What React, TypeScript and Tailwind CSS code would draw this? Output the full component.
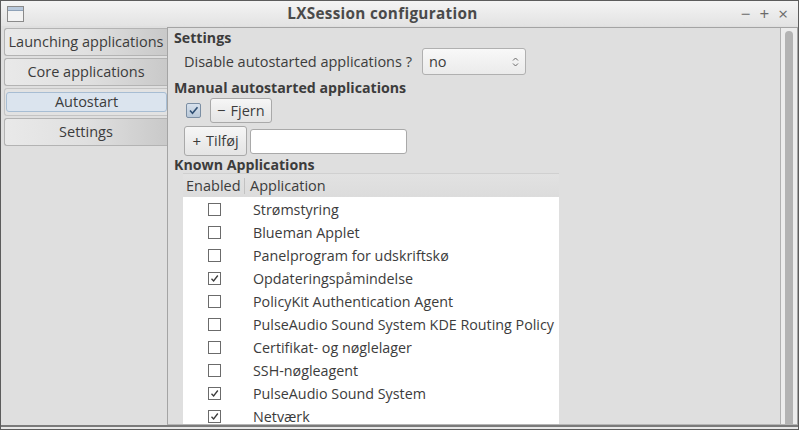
import React from "react";

const apps: { name: string; on: boolean }[] = [
  { name: "Strømstyring", on: false },
  { name: "Blueman Applet", on: false },
  { name: "Panelprogram for udskriftskø", on: false },
  { name: "Opdateringspåmindelse", on: true },
  { name: "PolicyKit Authentication Agent", on: false },
  { name: "PulseAudio Sound System KDE Routing Policy", on: false },
  { name: "Certifikat- og nøglelager", on: false },
  { name: "SSH-nøgleagent", on: false },
  { name: "PulseAudio Sound System", on: true },
  { name: "Netværk", on: true },
];

function Check({ on }: { on: boolean }) {
  return (
    <span className="flex h-[13px] w-[13px] items-center justify-center border border-[#6b6b6b] bg-white">
      {on && (
        <svg width="9" height="9" viewBox="0 0 9 9">
          <path d="M1.5 4.8 L3.6 7 L7.8 1.5" fill="none" stroke="#3a3a3a" strokeWidth="1.3" />
        </svg>
      )}
    </span>
  );
}

function Tab({ label, active }: { label: string; active?: boolean }) {
  if (active) {
    return (
      <div className="mb-[2px] ml-[3px] flex h-[28px] items-center rounded-l-[3px] border border-r-0 border-[#c4c4c4] bg-[#e2e2e2] pl-[1px]">
        <div className="flex h-[20px] w-full items-center justify-center rounded-[3px] border border-[#a7bdd3] bg-[#dbe4ee] text-[#3c3c3c]">
          {label}
        </div>
      </div>
    );
  }
  return (
    <div className="mb-[2px] ml-[3px] flex h-[28px] items-center justify-center rounded-l-[3px] border border-r-0 border-[#b3b3b3] bg-gradient-to-r from-[#e9e9e9] via-[#e0e0e0] to-[#c9c9c9] text-[#3c3c3c]">
      {label}
    </div>
  );
}

export default function App() {
  return (
    <div
      className="flex h-[430px] w-[799px] flex-col overflow-hidden border border-[#5c5c5c] bg-[#dfdfdf] text-[14.5px] text-[#3c3c3c]"
      style={{ fontFamily: '"Open Sans", "Noto Sans", sans-serif' }}
    >
      {/* title bar */}
      <div className="flex h-[25px] shrink-0 items-center bg-gradient-to-b from-[#f4f4f4] to-[#e3e3e3] px-[6px]">
        <svg width="17" height="16" viewBox="0 0 17 16">
          <rect x="0.5" y="0.5" width="16" height="15" fill="#f3f3f3" stroke="#8a8a8a" />
          <rect x="1" y="1" width="15" height="3" fill="#b9c9dc" />
          <line x1="1" y1="4.5" x2="16" y2="4.5" stroke="#8fa2b8" />
        </svg>
        <div className="flex-1 text-center text-[15.3px] font-bold tracking-[0.3px] text-[#4a4a4a]">
          LXSession configuration
        </div>
        <div className="flex items-center gap-[9px] pr-[4px] text-[17px] leading-none text-[#6a6a6a]">
          <span>−</span>
          <span>+</span>
          <span>×</span>
        </div>
      </div>

      <div className="flex min-h-0 flex-1 pt-[1px]">
        {/* sidebar */}
        <div className="w-[166px] shrink-0 pt-[1px]">
          <Tab label="Launching applications" />
          <Tab label="Core applications" />
          <Tab label="Autostart" active />
          <Tab label="Settings" />
        </div>

        {/* main panel */}
        <div className="flex min-w-0 flex-1 border border-[#a4a4a4] border-b-[#b5b5b5]">
          <div className="min-w-0 flex-1 overflow-hidden border-r border-[#b0b0b0] pl-[6px]">
            <div className="flex h-[20px] items-center text-[14.2px] font-bold">Settings</div>
            <div className="flex h-[27px] items-center pl-[10px]">
              <span>Disable autostarted applications ?</span>
              <div className="ml-[10px] flex h-[27px] w-[104px] items-center justify-between rounded-[3px] border border-[#b0b0b0] bg-gradient-to-b from-[#f8f8f8] to-[#ebebeb] pl-[6px] pr-[6px]">
                <span>no</span>
                <svg width="7" height="12" viewBox="0 0 7 12">
                  <path d="M1 4.5 L3.5 2 L6 4.5" fill="none" stroke="#6a6a6a" />
                  <path d="M1 7.5 L3.5 10 L6 7.5" fill="none" stroke="#6a6a6a" />
                </svg>
              </div>
            </div>
            <div className="mt-[3px] flex h-[20px] items-center text-[14.2px] font-bold">
              Manual autostarted applications
            </div>
            <div className="flex h-[25px] items-center pl-[12px]">
              <span className="flex h-[15px] w-[15px] items-center justify-center rounded-[2px] border border-[#7b8ea3] bg-gradient-to-b from-[#d7e1ec] to-[#b9c8d8]">
                <svg width="11" height="11" viewBox="0 0 11 11">
                  <path d="M2 5.5 L4.5 8.2 L9.5 2.2" fill="none" stroke="#2f4f73" strokeWidth="1.6" />
                </svg>
              </span>
              <button className="ml-[9px] flex h-[25px] items-center gap-[5px] rounded-[3px] border border-[#a9a9a9] bg-gradient-to-b from-[#f6f6f6] to-[#e4e4e4] px-[6px] text-[#3c3c3c]">
                <span className="text-[15px] leading-none">−</span>
                <span>Fjern</span>
              </button>
            </div>
            <div className="mt-[3px] flex h-[30px] items-center gap-[3px] pl-[10px]">
              <button className="flex h-[30px] w-[63px] items-center justify-center gap-[5px] rounded-[3px] border border-[#a9a9a9] bg-gradient-to-b from-[#f6f6f6] to-[#e4e4e4] text-[#3c3c3c]">
                <span className="text-[15px] leading-none">+</span>
                <span>Tilføj</span>
              </button>
              <div className="h-[25px] w-[157px] rounded-[3px] border border-[#a9a9a9] bg-white" />
            </div>
            <div className="flex h-[17px] items-center text-[14.2px] font-bold">Known Applications</div>
            {/* table */}
            <div className="ml-[9px] w-[376px]">
              <div className="flex h-[24px] items-center border-t border-[#d0d0d0] bg-gradient-to-b from-[#e2e2e2] to-[#dcdcdc]">
                <span className="w-[61px] pl-[3px]">Enabled</span>
                <span className="h-[16px] border-l border-[#c2c2c2]" />
                <span className="pl-[5px]">Application</span>
              </div>
              <div className="h-[240px] bg-white pt-[1px] text-[14.3px]">
                {apps.map((a) => (
                  <div key={a.name} className="flex h-[23px] items-center">
                    <span className="flex w-[62px] justify-center">
                      <Check on={a.on} />
                    </span>
                    <span className="ml-[8px] whitespace-nowrap">{a.name}</span>
                  </div>
                ))}
              </div>
            </div>
          </div>
          {/* scrollbar */}
          <div className="flex w-[16px] shrink-0 justify-center bg-[#ececec] pt-[3px]">
            <div className="h-full w-[8px] rounded-t-full bg-[#b3b3b3]" />
          </div>
        </div>
      </div>
      <div className="h-[4px] shrink-0 border-t-2 border-[#7a7a7a] bg-[#e8e8e8]" />
    </div>
  );
}
